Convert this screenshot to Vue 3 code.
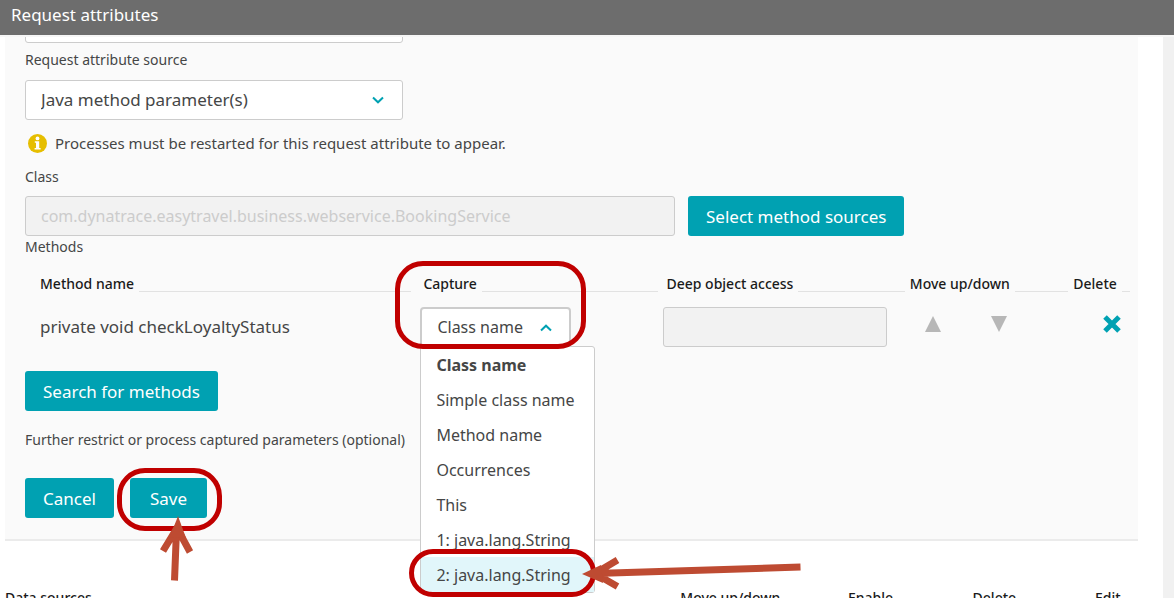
<script setup>
import { ref } from 'vue'

const source = ref('Java method parameter(s)')
const className = ref('com.dynatrace.easytravel.business.webservice.BookingService')
const capture = ref('Class name')
const options = [
  'Class name',
  'Simple class name',
  'Method name',
  'Occurrences',
  'This',
  '1: java.lang.String',
  '2: java.lang.String',
]
const highlighted = '2: java.lang.String'
const methodColumns = ['Method name', 'Capture', 'Deep object access', 'Move up/down', 'Delete']
const sourceColumns = ['Data sources', 'Move up/down', 'Enable', 'Delete', 'Edit']
</script>

<template>
  <div class="page">
    <header class="topbar"><h1>Request attributes</h1></header>

    <main class="content">
      <section class="panel">
        <input class="field name-field" type="text" aria-label="Request attribute name" />

        <label class="label source-label" for="source">Request attribute source</label>
        <div class="select-wrap source">
          <select id="source" v-model="source" class="field large">
            <option>Java method parameter(s)</option>
          </select>
          <svg class="chevron" viewBox="0 0 12 8" width="12" height="8" aria-hidden="true">
            <path d="M1 1.5 6 6.3 11 1.5" />
          </svg>
        </div>

        <p class="notice">
          <svg viewBox="0 0 19 19" width="19" height="19" aria-hidden="true">
            <circle cx="9.5" cy="9.5" r="9.5" fill="#e6be00" />
            <circle cx="9.5" cy="4.4" r="1.9" fill="#fff" />
            <path d="M6.8 7.3h4.4v6.8h1.4v1.5H6.6v-1.5H8V8.8H6.8z" fill="#fff" />
          </svg>
          <span>Processes must be restarted for this request attribute to appear.</span>
        </p>

        <label class="label class-label" for="class-name">Class</label>
        <div class="class-row">
          <input id="class-name" v-model="className" class="field disabled" type="text" disabled />
          <button class="btn" type="button">Select method sources</button>
        </div>

        <h2 class="label methods-label">Methods</h2>
        <table class="methods">
          <colgroup>
            <col class="c-name" /><col class="c-capture" /><col class="c-deep" /><col class="c-move" /><col class="c-delete" />
          </colgroup>
          <thead>
            <tr>
              <th v-for="c in methodColumns" :key="c" scope="col"><div class="head"><span>{{ c }}</span></div></th>
            </tr>
          </thead>
          <tbody>
            <tr>
              <td class="large">private void checkLoyaltyStatus</td>
              <td>
                <div class="select-wrap capture">
                  <select v-model="capture" class="field open" aria-label="Capture">
                    <option v-for="o in options" :key="o">{{ o }}</option>
                  </select>
                  <svg class="chevron" viewBox="0 0 12 8" width="12" height="8" aria-hidden="true">
                    <path d="M1 6.5 6 1.7 11 6.5" />
                  </svg>
                  <ul class="menu" role="listbox" aria-label="Capture options">
                    <li
                      v-for="o in options"
                      :key="o"
                      role="option"
                      :aria-selected="o === capture"
                      :class="{ selected: o === capture, active: o === highlighted }"
                    >
                      {{ o }}
                      <template v-if="o === highlighted">
                        <span class="ring ring-option"></span>
                        <svg class="arrow arrow-left" viewBox="0 0 222 34" width="222" height="34" aria-hidden="true">
                          <path class="stroke" d="M219.500 10 14 16.500M36.500 3 14 16.500 36.500 29.500" />
                          <path class="tip" d="M1 17 20 8 22 26z" />
                        </svg>
                      </template>
                    </li>
                  </ul>
                  <span class="ring ring-capture"></span>
                </div>
              </td>
              <td><input class="field disabled deep" type="text" aria-label="Deep object access" disabled /></td>
              <td>
                <div class="moves">
                  <button class="icon" type="button" aria-label="Move up">
                    <svg viewBox="0 0 16 16" width="16" height="16"><path d="M8 0 16 16H0z" fill="#b7b7b7" /></svg>
                  </button>
                  <button class="icon" type="button" aria-label="Move down">
                    <svg viewBox="0 0 16 16" width="16" height="16"><path d="M0 0H16L8 16z" fill="#b7b7b7" /></svg>
                  </button>
                </div>
              </td>
              <td>
                <button class="icon remove" type="button" aria-label="Delete">
                  <svg viewBox="0 0 18 18" width="18" height="18">
                    <path d="M2 2 16 16M16 2 2 16" stroke="#00a1b2" stroke-width="5" />
                  </svg>
                </button>
              </td>
            </tr>
          </tbody>
        </table>

        <button class="btn search" type="button">Search for methods</button>
        <p class="label restrict">Further restrict or process captured parameters (optional)</p>

        <div class="actions">
          <button class="btn" type="button">Cancel</button>
          <div class="save">
            <button class="btn" type="button">Save</button>
            <span class="ring ring-save"></span>
            <svg class="arrow arrow-up" viewBox="0 0 36 66" width="36" height="66" aria-hidden="true">
              <path class="stroke" d="M15.500 64.500 17.500 14M4 35 18 12 31 36" />
              <path class="tip" d="M19 0 11 21 27 22z" />
            </svg>
          </div>
        </div>
      </section>

      <table class="sources">
        <colgroup>
          <col class="s-name" /><col class="s-move" /><col class="s-enable" /><col class="s-delete" /><col class="s-edit" />
        </colgroup>
        <thead>
          <tr><th v-for="c in sourceColumns" :key="c" scope="col">{{ c }}</th></tr>
        </thead>
      </table>
    </main>
  </div>
</template>

<style>
body {
  margin: 0;
  background: #fff;
}
</style>

<style scoped>
* {
  box-sizing: border-box;
}
.page {
  height: 100vh;
  display: flex;
  flex-direction: column;
  overflow: hidden;
  font: 16px/20px "Noto Sans", "Open Sans", sans-serif;
  color: #454646;
}
.topbar {
  flex: none;
  height: 37px;
  padding: 5px 11px;
  background: #6d6d6d;
  border-bottom: 2px solid #f6f6f6;
}
h1 {
  margin: 0;
  font-size: 17px;
  line-height: 20px;
  font-weight: 400;
  color: #fff;
}
.content {
  flex: 1;
  min-height: 0;
  overflow: hidden;
  padding: 0 25px 0 5px;
  border-right: 11px solid #f1f1f1;
}
.panel {
  margin-top: -34px;
  padding: 0 8px 21px 20px;
  background: #fafafa;
  border-bottom: 2px solid #ebebeb;
}
.field {
  display: block;
  width: 100%;
  height: 40px;
  padding: 0 15px;
  border: 1px solid #ccc;
  border-radius: 3px;
  background: #fff;
  color: #454646;
  font: inherit;
  appearance: none;
}
.large {
  font-size: 17px;
}
.field.disabled {
  background: #f2f2f2;
  color: #ccc;
}
.name-field,
.source {
  width: 378px;
}
.label {
  display: block;
  margin: 0;
  font-size: 14px;
  line-height: 20px;
  font-weight: 400;
}
.source-label {
  padding: 7px 0 10px;
}
.select-wrap {
  position: relative;
}
.chevron {
  position: absolute;
  right: 19px;
  top: 16px;
  fill: none;
  stroke: #00a1b2;
  stroke-width: 2;
}
.notice {
  display: flex;
  align-items: center;
  gap: 8px;
  margin: 13px 0 14px;
  padding-left: 3px;
  font-size: 15px;
  line-height: 20px;
}
.class-label {
  padding-bottom: 9px;
}
.class-row {
  display: flex;
  gap: 13px;
}
.class-row .field {
  width: 650px;
}
.btn {
  height: 40px;
  padding: 2px 18px 0;
  border: 0;
  border-radius: 3px;
  background: #00a1b2;
  color: #fff;
  font: inherit;
  font-size: 17px;
  white-space: nowrap;
}
.methods-label {
  padding: 1px 0 17px;
}
table {
  border-collapse: collapse;
  table-layout: fixed;
}
th {
  padding: 0;
  font-size: 14px;
  line-height: 20px;
  font-weight: 500;
  text-align: left;
  color: #1a1a1a;
  white-space: nowrap;
}
.methods {
  width: calc(100% - 15px);
  margin-left: 15px;
}
.c-name { width: 34.9%; }
.c-capture { width: 22.3%; }
.c-deep { width: 22.6%; }
.c-move { width: 15%; }
.c-delete { width: 5.2%; }
.head {
  display: flex;
  gap: 5px;
  align-items: flex-end;
  padding-right: 5px;
}
.head::after {
  content: "";
  flex: 1;
  margin-bottom: 2px;
  border-bottom: 1px solid #e2e2e2;
}
th:first-child .head {
  padding-right: 9px;
}
th:last-child .head {
  padding-right: 0;
}
th:nth-child(2) .head,
th:nth-child(3) .head {
  padding-left: 3px;
}
.methods td {
  padding: 13px 0 0;
}
.capture {
  width: 151px;
}
.open {
  border: 2px solid #ccc;
  border-radius: 4px 4px 0 0;
}
.capture .chevron {
  top: 17px;
}
.menu {
  position: absolute;
  z-index: 1;
  left: 0;
  top: 39px;
  width: 175px;
  margin: 0;
  padding: 0;
  list-style: none;
  background: #fff;
  border: 1px solid #ccc;
  border-radius: 0 3px 3px 3px;
}
.menu li {
  position: relative;
  padding: 8px 15px 7px;
  line-height: 20px;
  white-space: nowrap;
}
.menu .selected {
  font-weight: 700;
}
.menu .active {
  background: #e1f6fa;
}
.ring {
  position: absolute;
  z-index: 2;
  border: 5px solid #c00000;
  border-radius: 28px;
  pointer-events: none;
}
.ring-capture {
  left: -25px;
  top: -46px;
  width: 191px;
  height: 88px;
}
.ring-option {
  left: -12px;
  top: -8px;
  width: 187px;
  height: 48px;
}
.ring-save {
  left: -13px;
  top: -10px;
  width: 105px;
  height: 63px;
}
.arrow {
  position: absolute;
  z-index: 3;
  pointer-events: none;
}
.arrow-left {
  left: 160px;
  top: 0;
}
.arrow-up {
  left: 29px;
  top: 38px;
}
.stroke {
  fill: none;
  stroke: #be4b32;
  stroke-width: 7;
}
.tip {
  fill: #be4b32;
}
.deep {
  width: 224px;
}
.moves {
  display: flex;
  gap: 50px;
  padding: 0 0 6px 15px;
}
.icon {
  display: block;
  padding: 0;
  border: 0;
  background: none;
}
.icon svg {
  display: block;
}
.remove {
  margin: 0 0 6px 30px;
}
.search {
  display: block;
  margin-top: 24px;
}
.restrict {
  padding: 19px 0 28px;
}
.actions {
  display: flex;
  gap: 16px;
}
.save {
  position: relative;
}
.save .btn {
  padding: 2px 20px 0;
}
.sources {
  width: 100%;
  margin-top: 47px;
}
.s-name { width: 59.6%; }
.s-move { width: 14.8%; }
.s-enable { width: 11%; }
.s-delete { width: 10.8%; }
.s-edit { width: 3.8%; }
</style>
